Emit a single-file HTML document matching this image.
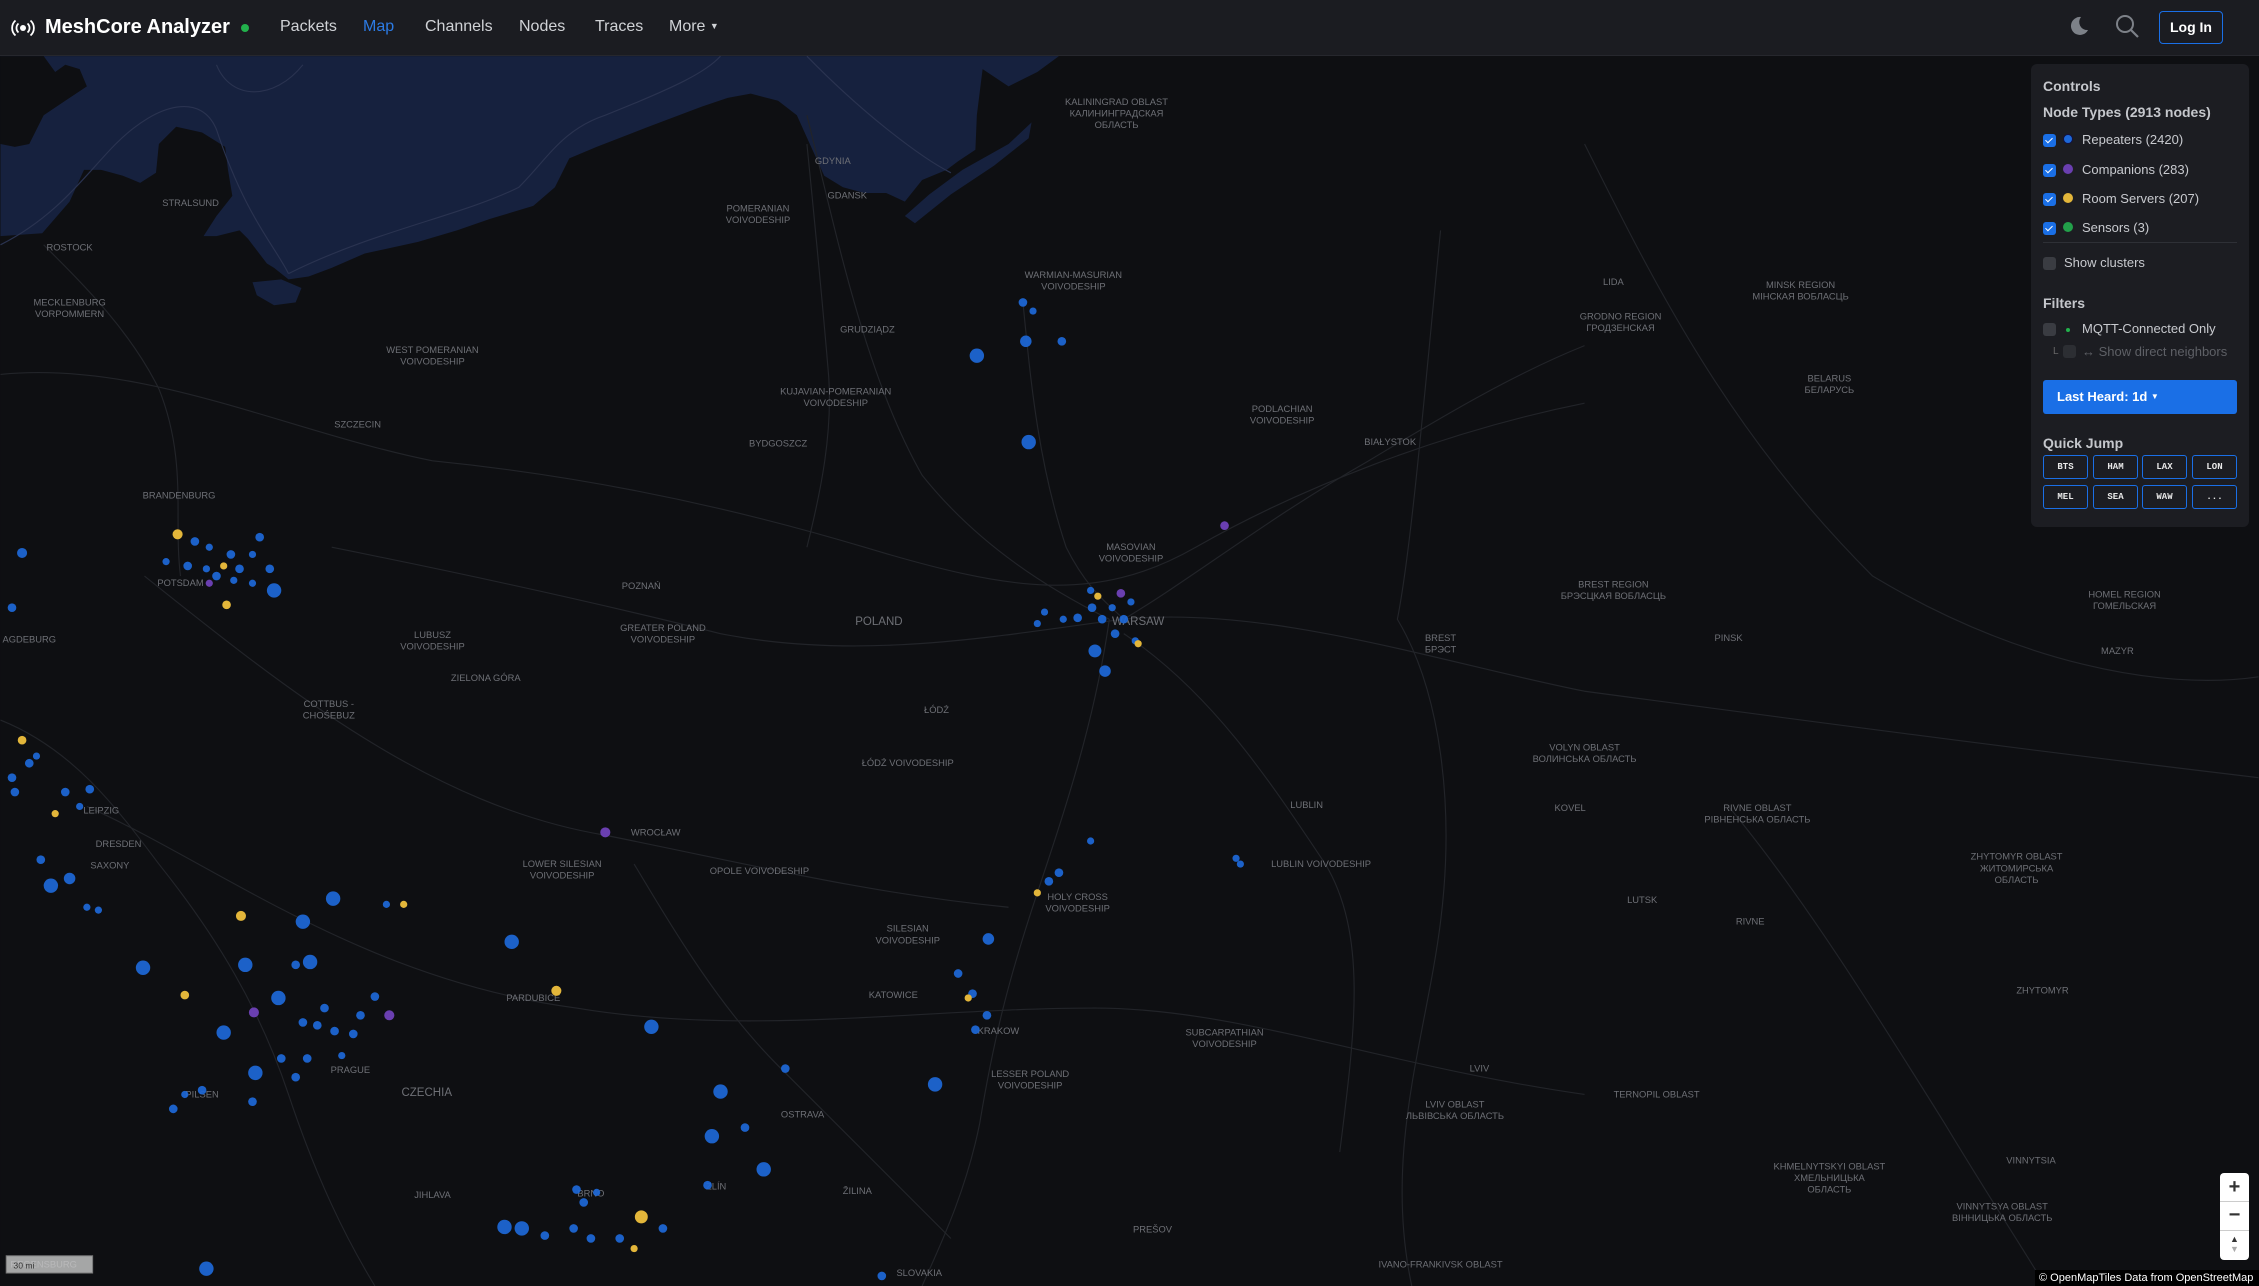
<!DOCTYPE html>
<html><head><meta charset="utf-8">
<style>
*{box-sizing:border-box;margin:0;padding:0}
html,body{width:2259px;height:1286px;overflow:hidden;background:#0e0f12;font-family:"Liberation Sans",sans-serif}
#map{position:absolute;left:0;top:0}
.hdr{position:absolute;left:0;top:0;width:2259px;height:56px;background:#1b1c21;border-bottom:1px solid #26272d}
.hdr .t{position:absolute;top:16px;color:#fff;font-weight:bold;font-size:20px}
.nav{position:absolute;top:18px;color:#d0d2d6;font-size:16px}
.panel{position:absolute;left:2031px;top:64px;width:218px;height:463px;background:#1c1d22;border-radius:6px;color:#c8cacf;font-size:13px}
.panel .a{position:absolute;left:12px}
.b{font-weight:bold;color:#c5c7cc}
.cb{position:absolute;left:12px;width:13px;height:13px;border-radius:3px;background:#1a6fe6}
.cb::after{content:"";position:absolute;left:4px;top:1.5px;width:3px;height:6px;border:solid #fff;border-width:0 1.6px 1.6px 0;transform:rotate(45deg)}
.cbo{position:absolute;width:13px;height:13px;border-radius:3px;background:#3a3c42}
.dot{position:absolute;left:32px;width:10px;height:10px;border-radius:50%}
.qj{position:absolute;width:45px;height:24px;border:1px solid #1a6fe6;border-radius:3px;color:#e8e8e8;font:bold 9px "Liberation Mono",monospace;text-align:center;line-height:22px}
</style></head><body>
<svg id="map" width="2259" height="1286" viewBox="0 0 1568 893" xmlns="http://www.w3.org/2000/svg">
<rect width="1568" height="893" fill="#0e0f12"/>
<path fill="#16213e" d="M0 39 L735 39 L720 50 L700 60 L682 48 L678 80 L677 104 L665 112 L657 118 L640 125 L628 140 L615 134 L600 134 L585 130 L572 122 L562 100 L553 80 L540 70 L521 65 L505 68 L487 74 L450 88 L414 102 L395 110 L385 130 L370 143 L340 152 L317 160 L290 168 L253 176 L230 186 L214 192 L200 194 L190 186 L185 183 L172 166 L166 160 L158 162 L150 164 L141 164 L150 150 L161 136 L158 118 L156 102 L140 92 L122 88 L110 100 L108 120 L97 127 L85 122 L70 118 L58 118 L48 140 L29 162 L0 164 Z"/>
<path fill="#16213e" d="M175 196 L195 194 L209 200 L205 210 L190 212 L178 205 Z"/>
<path fill="#16213e" d="M628 150 L645 135 L668 118 L700 100 L716 85 L714 96 L690 115 L660 135 L635 155 Z"/>
<path fill="#0e0f12" d="M0 39 L30 39 L38 50 L45 45 L55 48 L60 60 L45 70 L30 80 L20 100 L10 102 L0 100 Z"/>
<g fill="none" stroke="#2a3350" stroke-width="0.8"><path d="M0 170 C40 150 60 120 80 100 C110 70 140 65 150 90 C170 150 190 170 200 190"/><path d="M150 45 C160 70 190 70 210 45"/><path d="M200 190 C260 160 320 150 360 130 C380 110 390 90 420 80 C470 60 490 50 500 39"/><path d="M560 39 C600 80 640 110 660 120"/></g>
<g fill="none" stroke="#222429" stroke-width="0.8">
<path d="M0 260 C100 250 200 300 300 320 C400 330 500 350 600 380 C700 410 760 420 830 380 C900 340 1000 300 1100 280"/>
<path d="M230 380 C330 400 420 420 500 440 C600 460 700 440 780 430 C880 420 1000 460 1100 480 C1250 500 1400 520 1568 540"/>
<path d="M770 430 C760 500 740 560 720 620 C700 680 690 720 680 780 C670 830 650 870 640 893"/>
<path d="M710 210 C715 260 720 320 740 380 C755 410 770 420 780 430"/>
<path d="M560 80 C580 160 600 260 640 330 C680 380 730 410 770 430"/>
<path d="M780 430 C830 400 880 360 950 320 C1000 290 1050 260 1100 240"/>
<path d="M100 400 C200 480 300 560 420 580 C520 600 600 620 700 630"/>
<path d="M60 560 C150 600 250 680 400 700 C520 720 640 700 760 700 C860 700 960 740 1100 760"/>
<path d="M780 440 C840 480 880 540 920 600 C950 650 940 720 930 800"/>
<path d="M1000 160 C990 260 980 380 970 430 C1000 480 1010 560 1000 640 C990 720 960 800 980 893"/>
<path d="M1100 100 C1150 200 1200 300 1300 400 C1400 460 1500 480 1568 470"/>
<path d="M0 500 C50 520 80 560 110 600 C150 650 180 700 200 760 C220 820 240 860 260 893"/>
<path d="M440 600 C470 650 500 700 540 740 C580 780 620 820 660 860"/>
<path d="M1200 560 C1250 620 1300 700 1350 780 C1380 830 1400 860 1420 893"/>
<path d="M560 100 C565 150 570 200 575 260 C578 300 570 340 560 380"/>
<path d="M30 170 C60 200 90 230 110 270 C130 320 120 360 125 400"/>
</g>
<g fill="#6e7076" font-family="Liberation Sans,sans-serif" font-size="6.5" text-anchor="middle">
<text x="48" y="174">ROSTOCK</text><text x="48" y="212">MECKLENBURG</text><text x="48" y="220">VORPOMMERN</text><text x="132" y="143">STRALSUND</text>
<text x="588" y="138">GDANSK</text><text x="578" y="114">GDYNIA</text><text x="526" y="147">POMERANIAN</text><text x="526" y="155">VOIVODESHIP</text>
<text x="775" y="73">KALININGRAD OBLAST</text><text x="775" y="81">КАЛИНИНГРАДСКАЯ</text><text x="775" y="89">ОБЛАСТЬ</text>
<text x="745" y="193">WARMIAN-MASURIAN</text><text x="745" y="201">VOIVODESHIP</text><text x="300" y="245">WEST POMERANIAN</text><text x="300" y="253">VOIVODESHIP</text>
<text x="248" y="297">SZCZECIN</text><text x="602" y="231">GRUDZIĄDZ</text><text x="580" y="274">KUJAVIAN-POMERANIAN</text><text x="580" y="282">VOIVODESHIP</text><text x="540" y="310">BYDGOSZCZ</text>
<text x="890" y="286">PODLACHIAN</text><text x="890" y="294">VOIVODESHIP</text><text x="965" y="309">BIAŁYSTOK</text><text x="1120" y="198">LIDA</text><text x="1125" y="222">GRODNO REGION</text><text x="1125" y="230">ГРОДЗЕНСКАЯ</text>
<text x="1270" y="265">BELARUS</text><text x="1270" y="273">БЕЛАРУСЬ</text><text x="1250" y="200">MINSK REGION</text><text x="1250" y="208">МІНСКАЯ ВОБЛАСЦЬ</text>
<text x="785" y="382">MASOVIAN</text><text x="785" y="390">VOIVODESHIP</text><text x="790" y="434" font-size="8">WARSAW</text><text x="610" y="434" font-size="8">POLAND</text>
<text x="445" y="409">POZNAŃ</text><text x="460" y="438">GREATER POLAND</text><text x="460" y="446">VOIVODESHIP</text><text x="300" y="443">LUBUSZ</text><text x="300" y="451">VOIVODESHIP</text><text x="337" y="473">ZIELONA GÓRA</text>
<text x="125" y="407">POTSDAM</text><text x="20" y="446">AGDEBURG</text><text x="124" y="346">BRANDENBURG</text><text x="228" y="491">COTTBUS -</text><text x="228" y="499">CHOŚEBUZ</text>
<text x="650" y="495">ŁÓDŹ</text><text x="630" y="532">ŁÓDŹ VOIVODESHIP</text><text x="455" y="580">WROCŁAW</text><text x="390" y="602">LOWER SILESIAN</text><text x="390" y="610">VOIVODESHIP</text>
<text x="527" y="607">OPOLE VOIVODESHIP</text><text x="748" y="625">HOLY CROSS</text><text x="748" y="633">VOIVODESHIP</text><text x="907" y="561">LUBLIN</text><text x="917" y="602">LUBLIN VOIVODESHIP</text>
<text x="1100" y="521">VOLYN OBLAST</text><text x="1100" y="529">ВОЛИНСЬКА ОБЛАСТЬ</text><text x="1000" y="445">BREST</text><text x="1000" y="453">БРЭСТ</text><text x="1120" y="408">BREST REGION</text><text x="1120" y="416">БРЭСЦКАЯ ВОБЛАСЦЬ</text>
<text x="1200" y="445">PINSK</text><text x="1475" y="415">HOMEL REGION</text><text x="1475" y="423">ГОМЕЛЬСКАЯ</text><text x="1470" y="454">MAZYR</text>
<text x="1220" y="563">RIVNE OBLAST</text><text x="1220" y="571">РІВНЕНСЬКА ОБЛАСТЬ</text><text x="1090" y="563">KOVEL</text><text x="1140" y="627">LUTSK</text><text x="1215" y="642">RIVNE</text>
<text x="1400" y="597">ZHYTOMYR OBLAST</text><text x="1400" y="605">ЖИТОМИРСЬКА</text><text x="1400" y="613">ОБЛАСТЬ</text><text x="1418" y="690">ZHYTOMYR</text>
<text x="630" y="647">SILESIAN</text><text x="630" y="655">VOIVODESHIP</text><text x="620" y="693">KATOWICE</text><text x="693" y="718">KRAKOW</text><text x="715" y="748">LESSER POLAND</text><text x="715" y="756">VOIVODESHIP</text>
<text x="850" y="719">SUBCARPATHIAN</text><text x="850" y="727">VOIVODESHIP</text><text x="1027" y="744">LVIV</text><text x="1010" y="769">LVIV OBLAST</text><text x="1010" y="777">ЛЬВІВСЬКА ОБЛАСТЬ</text>
<text x="1150" y="762">TERNOPIL OBLAST</text><text x="1270" y="812">KHMELNYTSKYI OBLAST</text><text x="1270" y="820">ХМЕЛЬНИЦЬКА</text><text x="1270" y="828">ОБЛАСТЬ</text>
<text x="1390" y="840">VINNYTSYA OBLAST</text><text x="1390" y="848">ВІННИЦЬКА ОБЛАСТЬ</text><text x="1410" y="808">VINNYTSIA</text>
<text x="296" y="761" font-size="8">CZECHIA</text><text x="140" y="762">PILSEN</text><text x="243" y="745">PRAGUE</text><text x="370" y="695">PARDUBICE</text><text x="557" y="776">OSTRAVA</text>
<text x="300" y="832">JIHLAVA</text><text x="410" y="831">BRNO</text><text x="497" y="826">ZLÍN</text><text x="595" y="829">ŽILINA</text><text x="800" y="856">PREŠOV</text><text x="638" y="886">SLOVAKIA</text>
<text x="1000" y="880">IVANO-FRANKIVSK OBLAST</text><text x="70" y="565">LEIPZIG</text><text x="76" y="603">SAXONY</text><text x="82" y="588">DRESDEN</text><text x="30" y="880">REGENSBURG</text>
</g>
<g fill="#1d68d8" fill-opacity="0.92">
<circle cx="710" cy="210" r="3"/><circle cx="717" cy="216" r="2.5"/><circle cx="712" cy="237" r="4"/><circle cx="737" cy="237" r="3"/><circle cx="678" cy="247" r="5"/><circle cx="714" cy="307" r="5"/>
<circle cx="15" cy="384" r="3.5"/><circle cx="8" cy="422" r="3"/><circle cx="135" cy="376" r="3"/><circle cx="145" cy="380" r="2.5"/><circle cx="160" cy="385" r="3"/><circle cx="175" cy="385" r="2.5"/><circle cx="130" cy="393" r="3"/><circle cx="143" cy="395" r="2.5"/><circle cx="150" cy="400" r="3"/><circle cx="166" cy="395" r="3"/><circle cx="187" cy="395" r="3"/><circle cx="190" cy="410" r="5"/><circle cx="162" cy="403" r="2.5"/><circle cx="175" cy="405" r="2.5"/><circle cx="115" cy="390" r="2.5"/><circle cx="180" cy="373" r="3"/>
<circle cx="760" cy="452" r="4.5"/><circle cx="767" cy="466" r="4"/><circle cx="748" cy="429" r="3"/><circle cx="758" cy="422" r="3"/><circle cx="765" cy="430" r="3"/><circle cx="772" cy="422" r="2.5"/><circle cx="780" cy="430" r="3"/><circle cx="785" cy="418" r="2.5"/><circle cx="738" cy="430" r="2.5"/><circle cx="725" cy="425" r="2.5"/><circle cx="720" cy="433" r="2.5"/><circle cx="774" cy="440" r="3"/><circle cx="788" cy="445" r="2.5"/><circle cx="757" cy="410" r="2.5"/>
<circle cx="8" cy="540" r="3"/><circle cx="20" cy="530" r="3"/><circle cx="25" cy="525" r="2.5"/><circle cx="45" cy="550" r="3"/><circle cx="55" cy="560" r="2.5"/><circle cx="10" cy="550" r="3"/><circle cx="62" cy="548" r="3"/>
<circle cx="35" cy="615" r="5"/><circle cx="48" cy="610" r="4"/><circle cx="28" cy="597" r="3"/><circle cx="60" cy="630" r="2.5"/><circle cx="68" cy="632" r="2.5"/><circle cx="231" cy="624" r="5"/><circle cx="210" cy="640" r="5"/><circle cx="268" cy="628" r="2.5"/><circle cx="355" cy="654" r="5"/><circle cx="99" cy="672" r="5"/><circle cx="170" cy="670" r="5"/><circle cx="205" cy="670" r="3"/><circle cx="215" cy="668" r="5"/><circle cx="193" cy="693" r="5"/><circle cx="155" cy="717" r="5"/><circle cx="210" cy="710" r="3"/><circle cx="220" cy="712" r="3"/><circle cx="232" cy="716" r="3"/><circle cx="245" cy="718" r="3"/><circle cx="260" cy="692" r="3"/><circle cx="250" cy="705" r="3"/><circle cx="177" cy="745" r="5"/><circle cx="195" cy="735" r="3"/><circle cx="213" cy="735" r="3"/><circle cx="205" cy="748" r="3"/><circle cx="140" cy="757" r="3"/><circle cx="120" cy="770" r="3"/><circle cx="175" cy="765" r="3"/><circle cx="128" cy="760" r="2.5"/><circle cx="237" cy="733" r="2.5"/><circle cx="225" cy="700" r="3"/>
<circle cx="452" cy="713" r="5"/><circle cx="686" cy="652" r="4"/><circle cx="665" cy="676" r="3"/><circle cx="675" cy="690" r="3"/><circle cx="685" cy="705" r="3"/><circle cx="677" cy="715" r="3"/><circle cx="649" cy="753" r="5"/><circle cx="545" cy="742" r="3"/><circle cx="517" cy="783" r="3"/><circle cx="494" cy="789" r="5"/><circle cx="500" cy="758" r="5"/><circle cx="530" cy="812" r="5"/><circle cx="491" cy="823" r="3"/><circle cx="400" cy="826" r="3"/><circle cx="405" cy="835" r="3"/><circle cx="350" cy="852" r="5"/><circle cx="362" cy="853" r="5"/><circle cx="378" cy="858" r="3"/><circle cx="410" cy="860" r="3"/><circle cx="430" cy="860" r="3"/><circle cx="460" cy="853" r="3"/><circle cx="143" cy="881" r="5"/><circle cx="612" cy="886" r="3"/>
<circle cx="735" cy="606" r="3"/><circle cx="728" cy="612" r="3"/><circle cx="858" cy="596" r="2.5"/><circle cx="861" cy="600" r="2.5"/><circle cx="757" cy="584" r="2.5"/><circle cx="398" cy="853" r="3"/><circle cx="414" cy="828" r="2.5"/>
</g>
<g fill="#e3b63a"><circle cx="123" cy="371" r="3.5"/><circle cx="157" cy="420" r="3"/><circle cx="155" cy="393" r="2.5"/><circle cx="15" cy="514" r="3"/><circle cx="38" cy="565" r="2.5"/><circle cx="167" cy="636" r="3.5"/><circle cx="280" cy="628" r="2.5"/><circle cx="386" cy="688" r="3.5"/><circle cx="128" cy="691" r="3"/><circle cx="720" cy="620" r="2.5"/><circle cx="445" cy="845" r="4.5"/><circle cx="440" cy="867" r="2.5"/><circle cx="672" cy="693" r="2.5"/><circle cx="762" cy="414" r="2.5"/><circle cx="790" cy="447" r="2.5"/></g>
<g fill="#6a3fb0"><circle cx="850" cy="365" r="3"/><circle cx="778" cy="412" r="3"/><circle cx="420" cy="578" r="3.5"/><circle cx="176" cy="703" r="3.5"/><circle cx="270" cy="705" r="3.5"/><circle cx="145" cy="405" r="2.5"/></g>
<rect x="4" y="872" width="60" height="12" fill="#ccc" fill-opacity="0.8" stroke="#777" stroke-width="0.7"/>
<text x="9" y="881" font-family="Liberation Sans,sans-serif" font-size="6" fill="#333">30 mi</text>
</svg>
<div class="hdr">
<svg style="position:absolute;left:11px;top:18px" width="24" height="20" viewBox="0 0 24 20"><circle cx="12" cy="10" r="3" fill="#fff"/><path d="M7.5 5.5a6 6 0 0 0 0 9M16.5 5.5a6 6 0 0 1 0 9M4.5 2.5a10 10 0 0 0 0 15M19.5 2.5a10 10 0 0 1 0 15" stroke="#fff" stroke-width="1.8" fill="none"/></svg>
<div class="t" style="left:45px">MeshCore Analyzer</div>
<div style="position:absolute;left:241px;top:24px;width:8px;height:8px;border-radius:50%;background:#22b14c"></div>
<div class="nav" style="left:280px">Packets</div>
<div class="nav" style="left:363px;color:#2c7be5">Map</div>
<div class="nav" style="left:425px">Channels</div>
<div class="nav" style="left:519px">Nodes</div>
<div class="nav" style="left:595px">Traces</div>
<div class="nav" style="left:669px">More <span style="font-size:9px;vertical-align:2px">▼</span></div>
<svg style="position:absolute;left:2066px;top:14px" width="24" height="24" viewBox="0 0 24 24"><path d="M15 3a9 9 0 1 0 7 13A8 8 0 0 1 15 3z" fill="#7d8188"/></svg>
<svg style="position:absolute;left:2114px;top:13px" width="26" height="26" viewBox="0 0 26 26"><circle cx="11" cy="11" r="8" stroke="#7d8188" stroke-width="2" fill="none"/><path d="M17 17l7 7" stroke="#7d8188" stroke-width="2.2"/></svg>
<div style="position:absolute;left:2159px;top:11px;width:64px;height:33px;border:1.5px solid #1a6fe6;border-radius:4px;color:#fff;font-weight:bold;font-size:14px;text-align:center;line-height:30px">Log In</div>
</div>
<div class="panel">
<div class="a b" style="top:14px;font-size:14px">Controls</div>
<div class="a b" style="top:40px;font-size:14px">Node Types (2913 nodes)</div>
<div class="cb" style="top:70px"></div><div class="dot" style="top:70px;background:#1d68d8;border:1px solid #114"></div><div class="a" style="left:51px;top:68px">Repeaters (2420)</div>
<div class="cb" style="top:100px"></div><div class="dot" style="top:100px;background:#6a3fb0"></div><div class="a" style="left:51px;top:98px">Companions (283)</div>
<div class="cb" style="top:129px"></div><div class="dot" style="top:129px;background:#e3b63a"></div><div class="a" style="left:51px;top:127px">Room Servers (207)</div>
<div class="cb" style="top:158px"></div><div class="dot" style="top:158px;background:#22a04a"></div><div class="a" style="left:51px;top:156px">Sensors (3)</div>
<div style="position:absolute;left:12px;top:178px;width:194px;height:1px;background:#2e3036"></div>
<div class="cbo" style="left:12px;top:193px"></div><div class="a" style="left:33px;top:191px">Show clusters</div>
<div class="a b" style="top:231px;font-size:14px">Filters</div>
<div class="cbo" style="left:12px;top:259px"></div><div style="position:absolute;left:35px;top:264px;width:4px;height:4px;border-radius:50%;background:#22b14c"></div><div class="a" style="left:51px;top:257px">MQTT-Connected Only</div>
<div class="a" style="left:22px;top:282px;font-size:10px;color:#666">L</div><div class="cbo" style="left:32px;top:281px;background:#2c2e33"></div><div class="a" style="left:51px;top:280px;color:#5e6066">↔ Show direct neighbors</div>
<div style="position:absolute;left:12px;top:316px;width:194px;height:34px;background:#1a6fe6;border-radius:3px;color:#fff;font-weight:bold;font-size:13px;line-height:34px;padding-left:14px">Last Heard: 1d <span style="font-size:8px;vertical-align:2px">▼</span></div>
<div class="a b" style="top:371px;font-size:14px">Quick Jump</div>
<div class="qj" style="left:12px;top:391px">BTS</div><div class="qj" style="left:62px;top:391px">HAM</div><div class="qj" style="left:111px;top:391px">LAX</div><div class="qj" style="left:161px;top:391px">LON</div>
<div class="qj" style="left:12px;top:421px">MEL</div><div class="qj" style="left:62px;top:421px">SEA</div><div class="qj" style="left:111px;top:421px">WAW</div><div class="qj" style="left:161px;top:421px">...</div>
</div>
<div style="position:absolute;left:2220px;top:1173px;width:29px;height:87px;background:#fff;border-radius:4px">
<div style="height:29px;border-bottom:1px solid #ccc;text-align:center;font:bold 20px/28px 'Liberation Sans',sans-serif;color:#333">+</div>
<div style="height:29px;border-bottom:1px solid #ccc;text-align:center;font:bold 20px/27px 'Liberation Sans',sans-serif;color:#333">−</div>
<div style="text-align:center;font-size:9px;color:#333;line-height:10px;padding-top:3px">▲<br><span style="color:#aaa">▼</span></div>
</div>
<div style="position:absolute;left:2035px;top:1270px;width:224px;height:16px;background:#000;color:#fff;font-size:11px;line-height:16px;padding-left:4px">© OpenMapTiles Data from OpenStreetMap</div>
</body></html>
